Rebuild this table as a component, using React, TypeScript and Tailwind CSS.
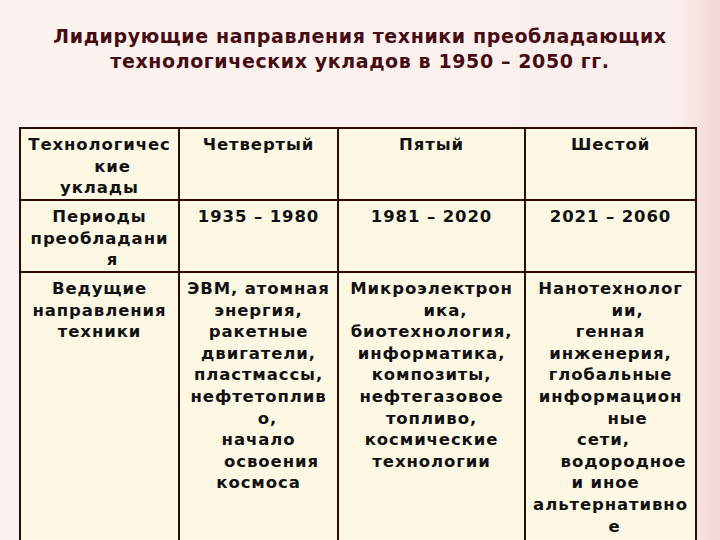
import React from 'react';

type Line = { t: string; c?: string };
const L = (t: string, c?: string): Line => ({ t, c });

// lines are broken by hand, as on the original slide; c nudges a line sideways
const rows: Line[][][] = [
  [
    [L('Технологичес'), L('кие', 'pl-[26px]'), L('уклады')],
    [L('Четвертый')],
    [L('Пятый')],
    [L('Шестой')],
  ],
  [
    [L('Периоды'), L('преобладани'), L('я', 'pl-[26px]')],
    [L('1935 – 1980')],
    [L('1981 – 2020')],
    [L('2021 – 2060')],
  ],
  [
    [L('Ведущие'), L('направления'), L('техники')],
    [
      L('ЭВМ, атомная'), L('энергия,'), L('ракетные'), L('двигатели,'), L('пластмассы,'),
      L('нефтетоплив'), L('о,', 'pl-[18px]'), L('начало'), L('освоения', 'pl-[26px]'), L('космоса'),
    ],
    [
      L('Микроэлектрон'), L('ика,', 'pl-[28px]'), L('биотехнология,'), L('информатика,'), L('композиты,'),
      L('нефтегазовое'), L('топливо,'), L('космические'), L('технологии'),
    ],
    [
      L('Нанотехнолог'), L('ии,', 'pl-[34px]'), L('генная'), L('инженерия,'), L('глобальные'),
      L('информацион'), L('ные', 'pl-[34px]'), L('сети,', 'pr-[14px]'), L('водородное', 'pl-[26px]'),
      L('и иное', 'pr-[10px]'), L('альтернативно'), L('е', 'pl-[8px]'),
    ],
  ],
];

const rowHeights = ['h-[72px]', 'h-[72px]', 'h-[290px]'];

const App: React.FC = () => {
  return (
    <div className="w-[720px] h-[540px] overflow-hidden bg-[linear-gradient(to_right,#fcf3f1_0%,#fbefed_94%,#f1d8d3_100%)] font-['DejaVu_Sans',sans-serif]">
      <h1 className="pt-[24px] text-center text-[19px] leading-[25px] tracking-[0.6px] font-bold text-[#470c12]">
        Лидирующие направления техники преобладающих
        <br />
        технологических укладов в 1950 – 2050 гг.
      </h1>

      <table className="mt-[53px] ml-[19px] w-[676px] table-fixed border-collapse bg-[#fcf8e3] text-[16.5px] leading-[21.6px] tracking-[0.9px] font-bold text-[#111]">
        <colgroup>
          <col className="w-[159px]" />
          <col className="w-[159px]" />
          <col className="w-[187px]" />
          <col className="w-[171px]" />
        </colgroup>
        <tbody>
          {rows.map((row, r) => (
            <tr key={r} className={rowHeights[r]}>
              {row.map((cell, c) => (
                <td key={c} className="border-2 border-[#2e0b07] px-0 pt-[5px] align-top text-center whitespace-nowrap">
                  {cell.map((line, i) => (
                    <div key={i} className={line.c}>{line.t}</div>
                  ))}
                </td>
              ))}
            </tr>
          ))}
        </tbody>
      </table>
    </div>
  );
};

export default App;
